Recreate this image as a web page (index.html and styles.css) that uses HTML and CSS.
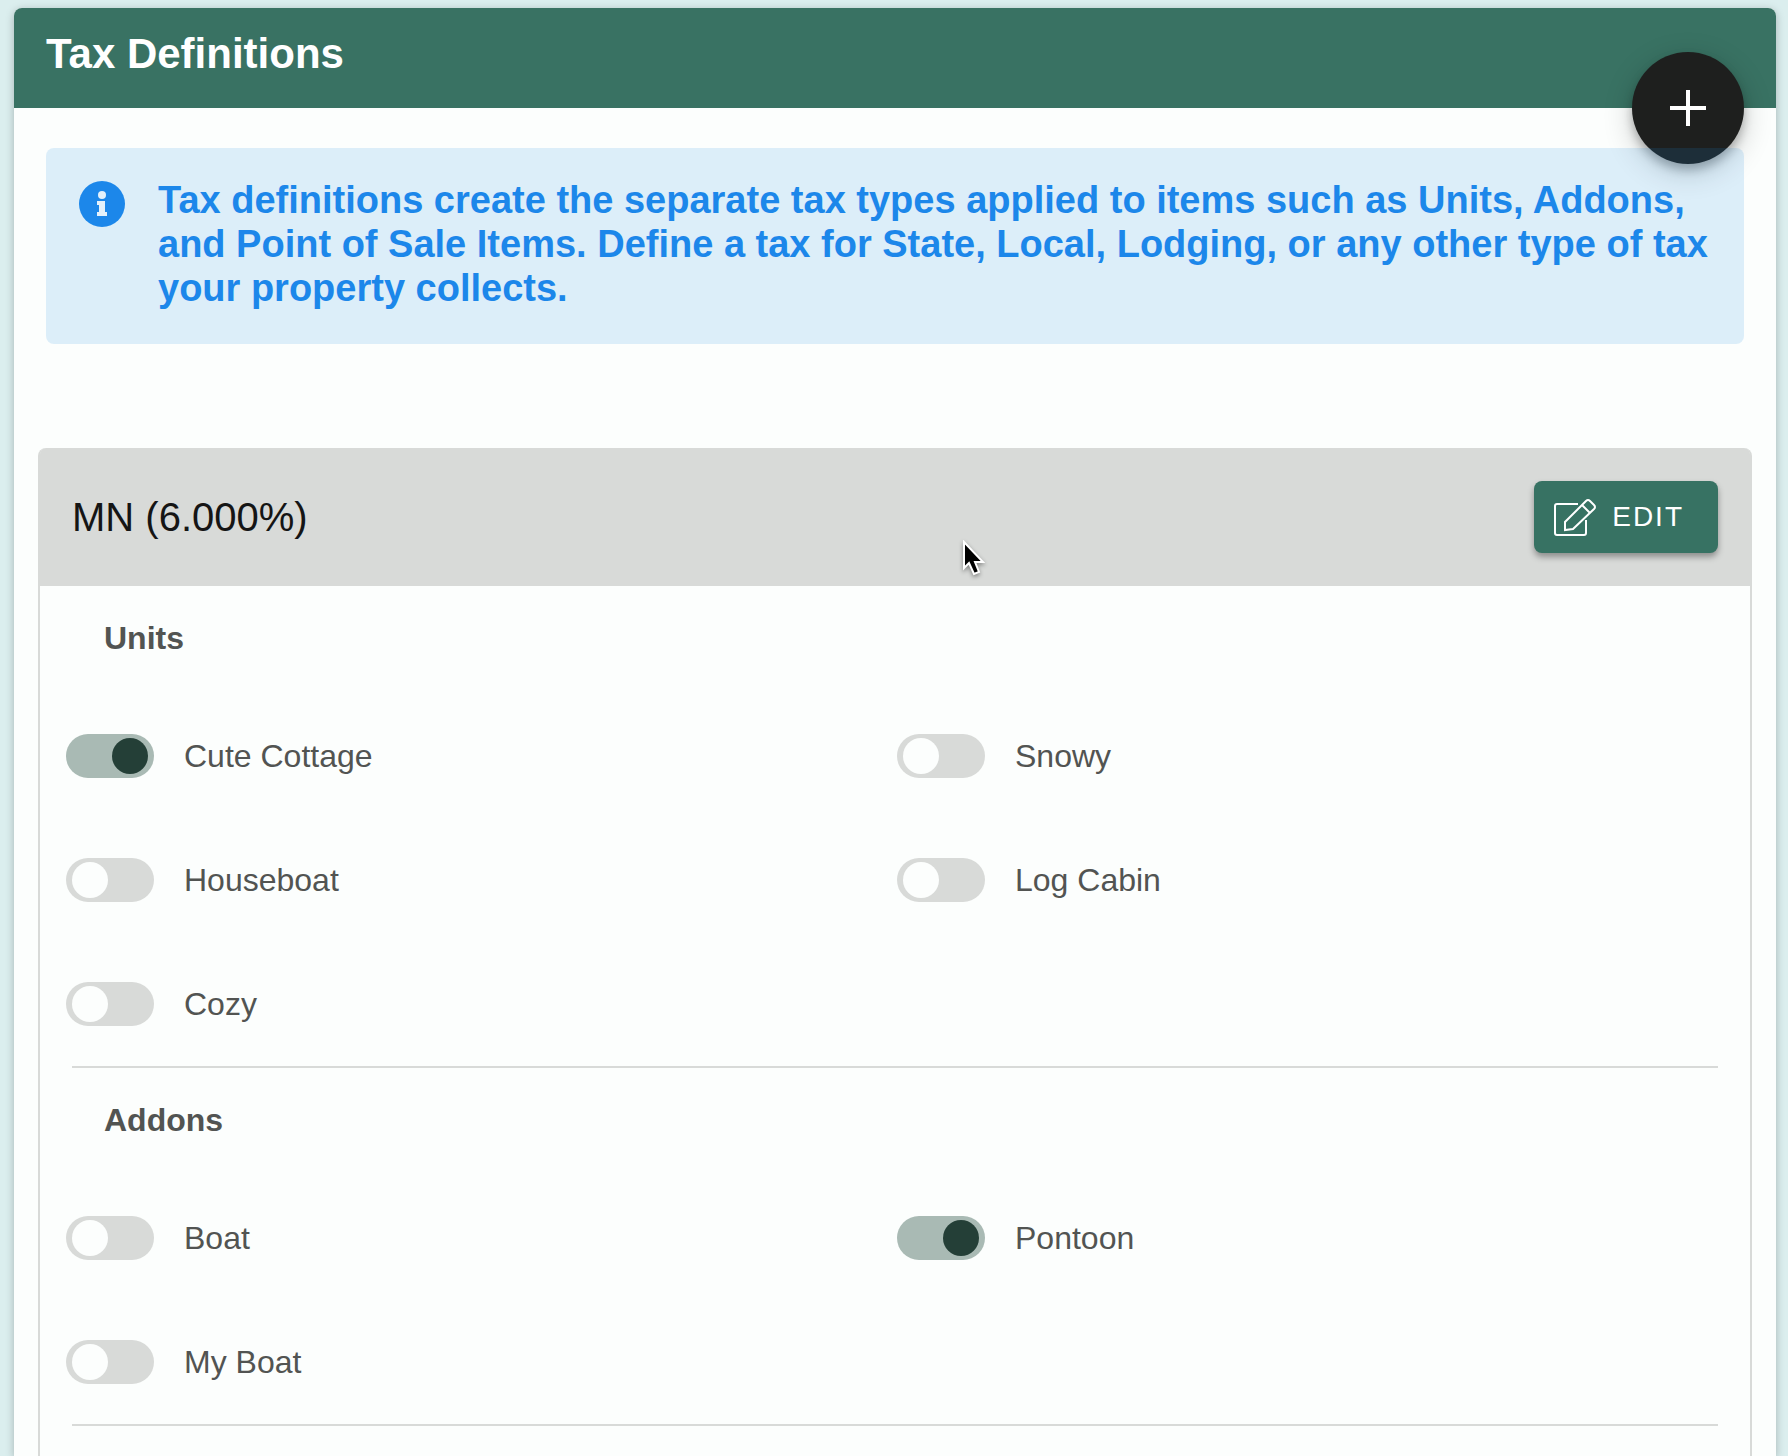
FILE: index.html
```html
<!DOCTYPE html>
<html lang="en">
<head>
  <meta charset="utf-8">
  <meta name="viewport" content="width=device-width, initial-scale=1">
  <title>Tax Definitions</title>
  <link rel="stylesheet" href="styles.css">
</head>
<body>
  <main class="card">
    <header class="card-header">
      <h1>Tax Definitions</h1>
      <button type="button" class="fab" aria-label="Add tax definition">
        <svg viewBox="0 0 36 36" aria-hidden="true"><path d="M18 0v36M0 18h36"/></svg>
      </button>
    </header>

    <div class="alert">
      <svg class="alert-icon" viewBox="0 0 48 48" aria-hidden="true">
        <circle cx="24" cy="24" r="23"/>
        <circle class="cut" cx="24" cy="15" r="4"/>
        <path class="cut" d="M19 21h8v11h2v4H19v-4h2v-7h-2z"/>
      </svg>
      <p>Tax definitions create the separate tax types applied to items such as Units, Addons, and Point of Sale Items. Define a tax for State, Local, Lodging, or any other type of tax your property collects.</p>
    </div>

    <!-- Tax panel -->
    <section class="panel">
      <div class="panel-header">
        <h2>MN (6.000%)</h2>
        <button type="button" class="edit-btn">
          <svg viewBox="0 0 42 38" aria-hidden="true">
            <path d="M24 6H3a2 2 0 0 0-2 2v27a2 2 0 0 0 2 2h27a2 2 0 0 0 2-2V22"/>
            <path d="M11 32v-8L32 3q2-2 4 0l4 4q2 2 0 4L19 31l-8 1zM28 7l8 8"/>
          </svg>
          Edit
        </button>
      </div>

      <fieldset class="group">
        <legend>Units</legend>
        <div class="switches">
          <label class="switch"><input type="checkbox" checked>Cute Cottage</label>
          <label class="switch"><input type="checkbox">Snowy</label>
          <label class="switch"><input type="checkbox">Houseboat</label>
          <label class="switch"><input type="checkbox">Log Cabin</label>
          <label class="switch"><input type="checkbox">Cozy</label>
        </div>
      </fieldset>
      <hr>
      <fieldset class="group">
        <legend>Addons</legend>
        <div class="switches">
          <label class="switch"><input type="checkbox">Boat</label>
          <label class="switch"><input type="checkbox" checked>Pontoon</label>
          <label class="switch"><input type="checkbox">My Boat</label>
        </div>
      </fieldset>
      <hr>
    </section>
  </main>

  <svg class="cursor" viewBox="0 0 24 36" aria-hidden="true">
    <path d="M1 2v26l5-5 5 11 5-2-4-10h8z"/>
  </svg>
</body>
</html>
```
FILE: styles.css
```css
* {
  box-sizing: border-box;
}
body {
  margin: 0;
  padding: 8px 12px 0 14px;
  min-height: 100vh;
  display: flex;
  background: #dbeeee;
  color: #525452;
  font-family: "Liberation Sans", Arial, sans-serif;
  font-size: 32px;
}
h1, h2, p {
  margin: 0;
}
button {
  border: none;
  font-family: inherit;
  color: white;
  cursor: pointer;
}
svg {
  display: block;
}
/* Card */
.card {
  flex: 1;
  display: flex;
  flex-direction: column;
  border-radius: 8px 8px 0 0;
  background: #fcfefd;
  box-shadow: 0 2px 8px rgba(0, 0, 0, 0.25);
}
.card-header {
  position: relative;
  padding: 22px 32px 30px;
  border-radius: 8px 8px 0 0;
  background: #397263;
  color: white;
}
h1 {
  font-size: 42px;
  line-height: 48px;
}
/* Round add button hanging off the header */
.fab {
  position: absolute;
  right: 32px;
  bottom: -56px;
  width: 112px;
  height: 112px;
  display: flex;
  align-items: center;
  justify-content: center;
  border-radius: 50%;
  background: #1e1f1e;
  box-shadow: 0 6px 10px rgba(0, 0, 0, 0.25), 0 8px 30px rgba(0, 0, 0, 0.2);
}
.fab svg {
  width: 36px;
  stroke: white;
  stroke-width: 4;
}
/* Info alert */
.alert {
  position: relative;
  display: flex;
  gap: 32px;
  margin: 40px 32px 0;
  padding: 30px 32px 34px;
  border-radius: 8px;
  background: rgba(25, 140, 225, 0.14);
  color: #1c87ea;
}
.alert p {
  font-size: 38px;
  font-weight: bold;
  line-height: 44px;
}
.alert-icon {
  flex: none;
  width: 48px;
  height: 48px;
  margin-top: 2px;
  fill: #1c87ea;
}
.alert-icon .cut {
  fill: #e4f1fb;
}
/* Tax panel */
.panel {
  flex: 1;
  margin: 104px 24px 0;
  border: 2px solid #d8dad8;
  border-width: 0 2px;
  border-radius: 8px 8px 0 0;
}
.panel-header {
  display: flex;
  align-items: center;
  justify-content: space-between;
  height: 138px;
  padding: 0 32px;
  background: #d8dad8;
  border-radius: 6px 6px 0 0;
}
h2 {
  color: #151515;
  font-size: 40px;
  font-weight: normal;
  line-height: 48px;
}
.edit-btn {
  display: flex;
  align-items: center;
  gap: 16px;
  height: 72px;
  padding: 0 34px 0 20px;
  border-radius: 8px;
  background: #377263;
  box-shadow: 0 4px 6px rgba(0, 0, 0, 0.35);
  font-size: 28px;
  letter-spacing: 2px;
  text-transform: uppercase;
}
.edit-btn svg {
  width: 42px;
  fill: none;
  stroke: white;
  stroke-width: 2;
}
/* Switch groups */
.group {
  margin: 0;
  padding: 0;
  border: none;
}
legend {
  padding: 32px 64px 36px;
  font-weight: bold;
  line-height: 40px;
}
.switches {
  display: grid;
  grid-template-columns: 1fr 1fr;
  padding: 0 22px 0 26px;
}
.switch {
  display: flex;
  align-items: center;
  gap: 30px;
  height: 124px;
}
.switch input {
  appearance: none;
  display: flex;
  align-items: center;
  width: 88px;
  height: 44px;
  margin: 0;
  padding: 0 6px;
  border-radius: 22px;
  background: #d8dad8;
  cursor: pointer;
}
.switch input::before {
  content: "";
  width: 36px;
  height: 36px;
  border-radius: 50%;
  background: #fcfefd;
}
.switch input:checked {
  justify-content: flex-end;
  background: #a9bab4;
}
.switch input:checked::before {
  background: #243f37;
}
hr {
  height: 2px;
  margin: 0 32px;
  border: none;
  background: #d8dad8;
}
/* Mouse pointer */
.cursor {
  position: absolute;
  left: 963px;
  top: 540px;
  width: 24px;
  height: 36px;
  stroke: white;
  stroke-width: 2;
  filter: drop-shadow(0 2px 2px rgba(0, 0, 0, 0.4));
}
```
